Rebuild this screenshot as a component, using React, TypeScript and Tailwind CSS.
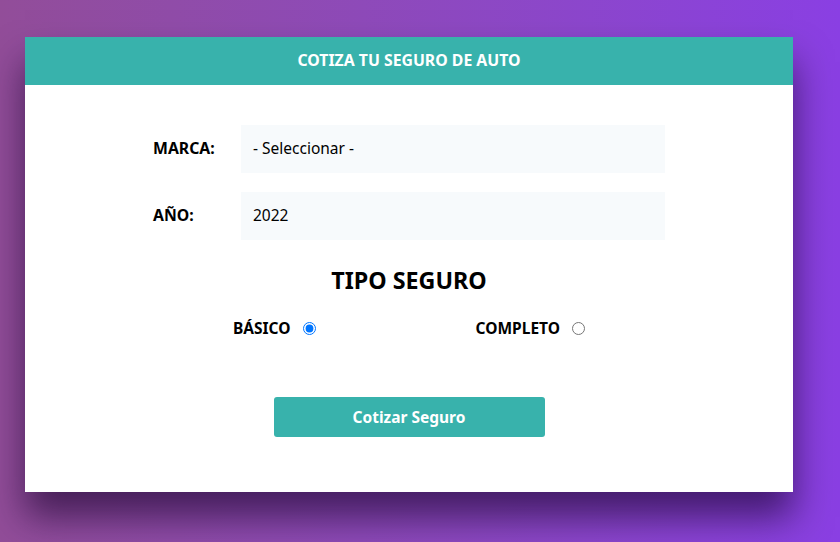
export default function App() {
  return (
    <div className="min-h-[542px] w-full bg-gradient-to-r from-[#924d99] to-[#8a3fe3] pt-[37px] [font-family:'Noto_Sans','Open_Sans',sans-serif]">
      <div className="mx-[25px] w-[768px] bg-white shadow-[0_25px_35px_rgba(20,0,40,0.6)]">
        <header className="flex h-12 items-center justify-center bg-[#38b2ac]">
          <h1 className="text-[15.8px] font-bold uppercase text-white">Cotiza tu seguro de auto</h1>
        </header>
        <form className="mx-auto w-[512px] pt-10 pb-[55px]">
          <div className="mb-[19px] flex items-center">
            <label className="w-[88px] text-[15.8px] font-bold text-black">MARCA:</label>
            <div className="flex h-12 flex-1 items-center bg-[#f7fafc] px-3 text-[15.5px] text-black">- Seleccionar -</div>
          </div>
          <div className="flex items-center">
            <label className="w-[88px] text-[15.8px] font-bold text-black">AÑO:</label>
            <div className="flex h-12 flex-1 items-center bg-[#f7fafc] px-3 text-[15.5px] text-black">2022</div>
          </div>
          <h2 className="mt-[22px] text-center text-[23.3px] font-bold leading-[36px] text-black">TIPO SEGURO</h2>
          <div className="mt-[19px] flex justify-around">
            <label className="flex items-center gap-3 text-[15.5px] font-bold text-black">
              BÁSICO
              <input type="radio" name="plan" defaultChecked className="m-0 h-[13px] w-[13px]" />
            </label>
            <label className="flex items-center gap-3 text-[15.5px] font-bold text-black">
              COMPLETO
              <input type="radio" name="plan" className="m-0 h-[13px] w-[13px]" />
            </label>
          </div>
          <div className="mt-[57px] flex justify-center">
            <button type="button" className="h-10 w-[271px] rounded-[3px] bg-[#38b2ac] text-[15.5px] font-bold text-white">
              Cotizar Seguro
            </button>
          </div>
        </form>
      </div>
    </div>
  );
}
